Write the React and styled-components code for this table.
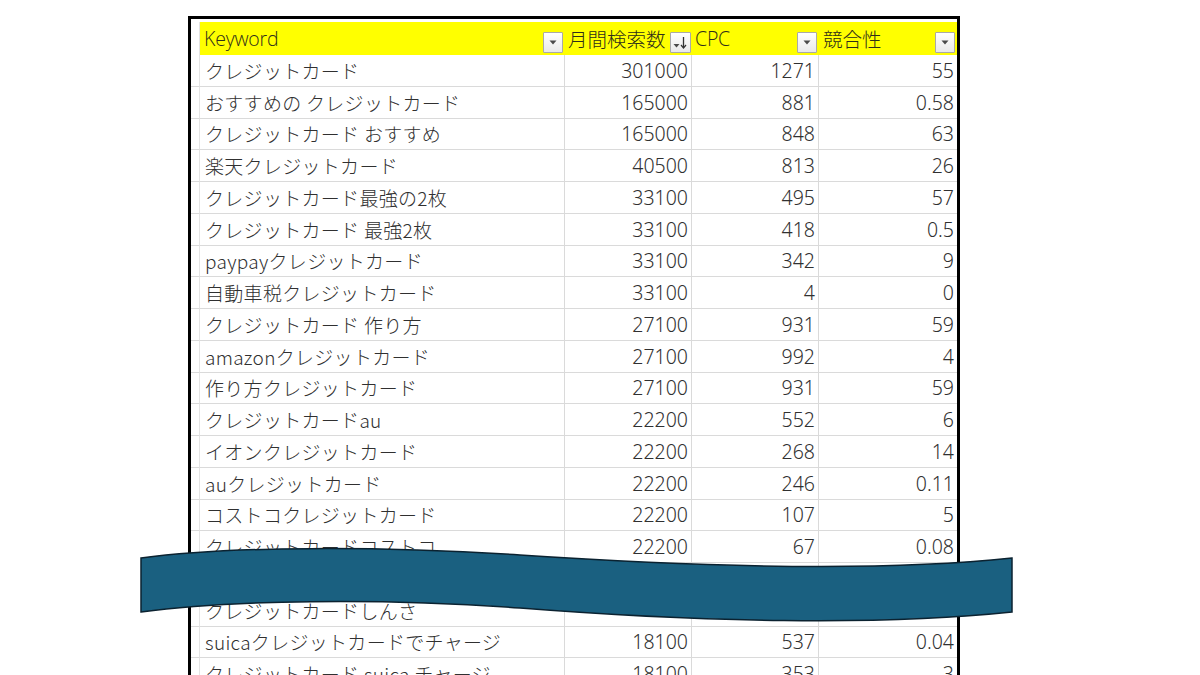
import React from "react";
import styled, { createGlobalStyle } from "styled-components";

const GlobalStyle = createGlobalStyle`
  html, body {
    margin: 0;
    padding: 0;
    background: #ffffff;
  }
  body {
    font-family: "Noto Sans CJK JP", "Noto Sans", sans-serif;
  }
`;

const COLUMNS = "9px 365px 127px 127px 138px";
const GRID = "#dadada";

const Page = styled.div`
  position: relative;
  width: 1200px;
  height: 675px;
  overflow: hidden;
  background: #ffffff;
  padding: 16px 0 0 188px;
  box-sizing: border-box;
`;

const Sheet = styled.div`
  width: 766px;
  height: 700px;
  border: 3px solid #000000;
  border-bottom: none;
  padding-top: 3px;
  background: #ffffff;
`;

const HeaderRow = styled.div`
  display: grid;
  grid-template-columns: ${COLUMNS};
  height: 33px;
`;

const Row = styled.div`
  display: grid;
  grid-template-columns: ${COLUMNS};
  height: 31.75px;
`;

const Gutter = styled.div`
  border-right: 1px solid #e4e4e4;
  border-bottom: ${(p) => (p.$head ? "none" : `1px solid ${GRID}`)};
`;

const HeadCell = styled.div`
  display: flex;
  align-items: center;
  gap: 4px;
  background: #ffff00;
  color: #2e2e1a;
  font-size: 19.5px;
  font-weight: 300;
  padding-left: ${(p) => p.$pad || 4}px;
  padding-right: 2px;
  white-space: nowrap;
  overflow: hidden;
`;

const HeadLabel = styled.span`
  flex: 1;
  font-family: ${(p) =>
    p.$latin ? '"Open Sans", "Noto Sans", sans-serif' : '"Noto Sans CJK JP", sans-serif'};
  letter-spacing: ${(p) => (p.$latin ? "-0.2px" : "0")};
`;

const FilterButton = styled.div`
  align-self: flex-end;
  margin-bottom: 2px;
  width: ${(p) => (p.$wide ? 21 : 20)}px;
  height: 21px;
  box-sizing: border-box;
  border: 1px solid #a9a9a9;
  border-radius: 1px;
  background: linear-gradient(#ffffff, #e9e9e9);
  display: flex;
  align-items: center;
  justify-content: center;
  flex-shrink: 0;
`;

const Cell = styled.div`
  display: flex;
  align-items: center;
  justify-content: ${(p) => (p.$num ? "flex-end" : "flex-start")};
  padding: ${(p) => (p.$num ? "0 3px 0 0" : "0 0 0 5px")};
  border-bottom: 1px solid ${GRID};
  border-right: ${(p) => (p.$last ? "none" : `1px solid ${GRID}`)};
  color: #303030;
  font-size: ${(p) => (p.$num ? 19.5 : 19)}px;
  font-weight: 300;
  white-space: nowrap;
  overflow: hidden;
  font-family: ${(p) =>
    p.$num ? '"Noto Sans", "Noto Sans CJK JP", sans-serif' : '"Noto Sans CJK JP", sans-serif'};
  letter-spacing: ${(p) => (p.$num ? "0" : "0.3px")};
`;

const Wave = styled.svg`
  position: absolute;
  left: 0;
  top: 0;
  width: 1200px;
  height: 675px;
  pointer-events: none;
`;

const rows = [
  ["クレジットカード", "301000", "1271", "55"],
  ["おすすめの クレジットカード", "165000", "881", "0.58"],
  ["クレジットカード おすすめ", "165000", "848", "63"],
  ["楽天クレジットカード", "40500", "813", "26"],
  ["クレジットカード最強の2枚", "33100", "495", "57"],
  ["クレジットカード 最強2枚", "33100", "418", "0.5"],
  ["paypayクレジットカード", "33100", "342", "9"],
  ["自動車税クレジットカード", "33100", "4", "0"],
  ["クレジットカード 作り方", "27100", "931", "59"],
  ["amazonクレジットカード", "27100", "992", "4"],
  ["作り方クレジットカード", "27100", "931", "59"],
  ["クレジットカードau", "22200", "552", "6"],
  ["イオンクレジットカード", "22200", "268", "14"],
  ["auクレジットカード", "22200", "246", "0.11"],
  ["コストコクレジットカード", "22200", "107", "5"],
  ["クレジットカードコストコ", "22200", "67", "0.08"],
  ["クレジットカード審査", "18100", "702", "1"],
  ["クレジットカードしんさ", "", "", ""],
  ["suicaクレジットカードでチャージ", "18100", "537", "0.04"],
  ["クレジットカード suica チャージ", "18100", "353", "3"],
];

const DropIcon = () => (
  <svg width="8" height="5" viewBox="0 0 8 5">
    <path d="M0.5 0.5 L7.5 0.5 L4 4.5 Z" fill="#4a4a4a" />
  </svg>
);

const SortIcon = () => (
  <svg width="15" height="13" viewBox="0 0 15 13">
    <path d="M0.5 8 L6.5 8 L3.5 11.5 Z" fill="#4a4a4a" />
    <path d="M10.5 1 L10.5 11.5" stroke="#333" strokeWidth="1.3" />
    <path d="M8 9 L10.5 12 L13 9" stroke="#333" strokeWidth="1.2" fill="none" />
  </svg>
);

const App = () => (
  <Page>
    <GlobalStyle />
    <Sheet>
      <HeaderRow>
        <Gutter $head />
        <HeadCell>
          <HeadLabel $latin>Keyword</HeadLabel>
          <FilterButton>
            <DropIcon />
          </FilterButton>
        </HeadCell>
        <HeadCell $pad={3}>
          <HeadLabel>月間検索数</HeadLabel>
          <FilterButton $wide>
            <SortIcon />
          </FilterButton>
        </HeadCell>
        <HeadCell $pad={3}>
          <HeadLabel $latin>CPC</HeadLabel>
          <FilterButton>
            <DropIcon />
          </FilterButton>
        </HeadCell>
        <HeadCell>
          <HeadLabel>競合性</HeadLabel>
          <FilterButton>
            <DropIcon />
          </FilterButton>
        </HeadCell>
      </HeaderRow>
      {rows.map(([kw, vol, cpc, comp], i) => (
        <Row key={i}>
          <Gutter />
          <Cell>{kw}</Cell>
          <Cell $num>{vol}</Cell>
          <Cell $num>{cpc}</Cell>
          <Cell $num $last>
            {comp}
          </Cell>
        </Row>
      ))}
    </Sheet>
    <Wave viewBox="0 0 1200 675">
      <path
        d="M141 558 C230 546 380 546 520 555 C700 567 880 572 1012 558 L1012 612 C880 626 700 622 520 608 C380 598 230 600 141 612 Z"
        fill="#1a6080"
        stroke="#0b2230"
        strokeWidth="1.5"
      />
    </Wave>
  </Page>
);

export default App;
